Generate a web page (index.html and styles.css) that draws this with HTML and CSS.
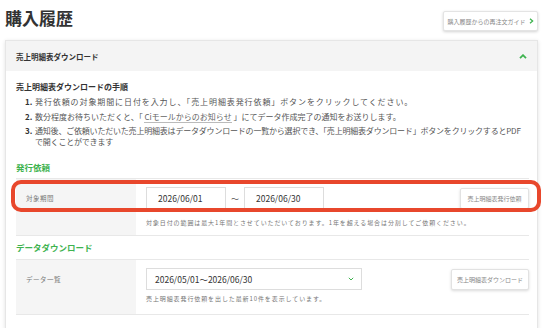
FILE: index.html
```html
<!DOCTYPE html>
<html lang="ja">
<head>
<meta charset="utf-8">
<link rel="stylesheet" href="styles.css">
</head>
<body>
<div class="top">
  <h1 class="title">購入履歴</h1>
  <a class="guide-btn">購入履歴からの再注文ガイド<svg class="guide-chev" width="5" height="6" viewBox="0 0 5 6"><polyline points="1,0.8 3.6,3 1,5.2" fill="none" stroke="#3eb34f" stroke-width="1.3"/></svg></a>
</div>
<div class="card">
  <div class="card-head">
    <span>売上明細表ダウンロード</span>
    <svg width="8" height="5" viewBox="0 0 8 5"><polyline points="1,4.2 4,1.2 7,4.2" fill="none" stroke="#3eb34f" stroke-width="1.8"/></svg>
  </div>
  <div class="card-body">
    <h3 class="steps-title">売上明細表ダウンロードの手順</h3>
    <ol class="steps">
      <li class="step-wide"><b class="num">1.</b><span>発行依頼の対象期間に日付を入力し、「売上明細表発行依頼」ボタンをクリックしてください。</span></li>
      <li><b class="num">2.</b><span>数分程度お待ちいただくと、「 <u class="link">Ciモールからのお知らせ</u> 」にてデータ作成完了の通知をお送りします。</span></li>
      <li class="step-tight"><b class="num">3.</b><span>通知後、ご依頼いただいた売上明細表はデータダウンロードの一覧から選択でき、「売上明細表ダウンロード」ボタンをクリックするとPDF<br>で開くことができます</span></li>
    </ol>

    <h4 class="sec-title">発行依頼</h4>
    <div class="row">
      <div class="highlight"></div>
      <div class="label">対象期間</div>
      <div class="content">
        <div class="line">
          <div class="input">2026/06/01</div>
          <span class="tilde">〜</span>
          <div class="input">2026/06/30</div>
          <a class="btn btn-issue">売上明細表発行依頼</a>
        </div>
        <p class="hint">対象日付の範囲は最大1年間とさせていただいております。1年を超える場合は分割してご依頼ください。</p>
      </div>
    </div>

    <h4 class="sec-title sec-2">データダウンロード</h4>
    <div class="row row-2">
      <div class="label">データ一覧</div>
      <div class="content">
        <div class="line">
          <div class="select">2026/05/01〜2026/06/30<svg width="6" height="4" viewBox="0 0 6 4"><polyline points="0.8,0.8 3,3 5.2,0.8" fill="none" stroke="#3eb34f" stroke-width="1"/></svg></div>
          <a class="btn btn-dl">売上明細表ダウンロード</a>
        </div>
        <p class="hint hint-2">売上明細表発行依頼を出した最新10件を表示しています。</p>
      </div>
    </div>
  </div>
</div>
</body>
</html>
```

FILE: styles.css
```css
* { box-sizing: border-box; }
html, body { margin: 0; padding: 0; background: #fff; }
body {
  font-family: "Noto Sans CJK JP", "Noto Sans", sans-serif;
  color: #333;
  width: 544px;
  height: 328px;
  overflow: hidden;
}
.top {
  display: flex;
  justify-content: space-between;
  align-items: flex-start;
  padding: 7px 6px 0 5px;
  height: 40px;
}
.title {
  margin: 0;
  font-size: 17px;
  line-height: 22px;
  font-weight: 700;
  color: #333;
}
.guide-btn {
  margin-top: 4px;
  width: 95px;
  height: 20px;
  display: flex;
  align-items: center;
  justify-content: center;
  gap: 3px;
  font-size: 6px;
  color: #888;
  background: #fff;
  border: 1px solid #e4e4e4;
  border-radius: 2px;
  box-shadow: 0 1px 3px rgba(0,0,0,0.18);
  white-space: nowrap;
}
.card {
  margin: 0 6px 0 5px;
  border: 1px solid #e6e6e6;
  box-shadow: 0 1px 4px rgba(0,0,0,0.12);
  background: #fff;
}
.card-head {
  height: 30px;
  background: #f4f4f4;
  display: flex;
  align-items: center;
  justify-content: space-between;
  padding: 0 10px 0 10px;
  font-size: 7.5px;
  font-weight: 700;
  color: #333;
}
.card-body {
  padding: 10px 8px 13px 10px;
}
.steps-title {
  margin: 0;
  font-size: 8px;
  line-height: 11px;
  font-weight: 700;
  color: #333;
}
.steps {
  list-style: none;
  margin: 5px 0 0 0;
  padding: 0 0 0 9px;
}
.steps li {
  display: flex;
  gap: 2px;
  font-size: 8px;
  line-height: 10.5px;
  color: #555;
  margin-bottom: 4px;
  white-space: nowrap;
}
.steps li.step-wide { letter-spacing: 0.9px; }
.steps li.step-tight { letter-spacing: -0.2px; }
.steps .num {
  color: #333;
  font-weight: 700;
  width: 8px;
  flex: none;
  letter-spacing: 0;
}
.link {
  text-decoration: none;
  border-bottom: 1px solid #bbb;
  color: #666;
}
.sec-title {
  margin: 15px 0 5px 0;
  font-size: 8.5px;
  line-height: 11px;
  font-weight: 700;
  color: #3eb34f;
}
.sec-2 { margin-top: 6px; margin-bottom: 6px; }
.row {
  position: relative;
  display: flex;
  border-top: 1px solid #e8e8e8;
  border-bottom: 1px solid #e8e8e8;
}
.highlight {
  position: absolute;
  left: -5px;
  right: -12px;
  top: 1px;
  height: 32px;
  border: 4px solid #e8472c;
  border-radius: 10px;
  z-index: 2;
  pointer-events: none;
}
.label {
  width: 120px;
  flex: none;
  background: #f5f5f5;
  font-size: 6.5px;
  color: #777;
  letter-spacing: 0.5px;
  padding: 14px 0 0 10px;
}
.content {
  flex: 1;
  padding: 8px 0 8px 10px;
}
.row-2 .content { padding-bottom: 11px; }
.line {
  display: flex;
  align-items: center;
}
.input {
  width: 80px;
  height: 22px;
  border: 1px solid #ddd;
  background: #fff;
  font-size: 8.5px;
  color: #333;
  display: flex;
  align-items: center;
  padding-left: 11px;
}
.tilde {
  width: 18px;
  text-align: center;
  font-size: 8px;
  color: #555;
}
.btn {
  margin-left: auto;
  height: 21px;
  display: flex;
  align-items: center;
  justify-content: center;
  font-size: 6px;
  color: #888;
  background: #fff;
  border: 1px solid #e2e2e2;
  border-radius: 2px;
  box-shadow: 0 1px 3px rgba(0,0,0,0.15);
  white-space: nowrap;
}
.btn-issue { width: 69px; }
.btn-dl { width: 78px; }
.select {
  width: 216px;
  height: 22px;
  border: 1px solid #ddd;
  background: #fff;
  font-size: 8.5px;
  color: #333;
  display: flex;
  align-items: center;
  justify-content: space-between;
  padding: 0 7px 0 8px;
}
.hint {
  margin: 10px 0 0 0;
  font-size: 6px;
  line-height: 8px;
  color: #777;
  letter-spacing: 0.9px;
}
.hint-2 { margin-top: 5px; }
```
